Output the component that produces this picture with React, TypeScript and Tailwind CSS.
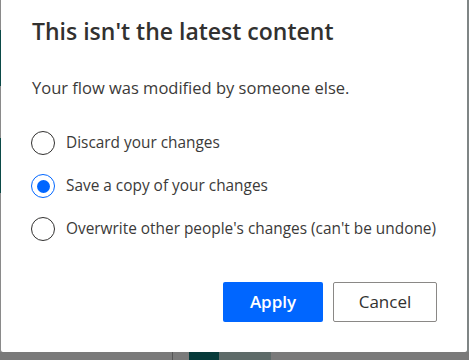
import { useState } from "react";

const options = [
  "Discard your changes",
  "Save a copy of your changes",
  "Overwrite other people's changes (can't be undone)",
];

function Radio({ checked }: { checked: boolean }) {
  return (
    <span
      className={`flex h-[24px] w-[24px] shrink-0 items-center justify-center rounded-full border ${
        checked ? "border-[#0066ff]" : "border-[#323130]"
      }`}
    >
      {checked && <span className="h-[13px] w-[13px] rounded-full bg-[#0066ff]" />}
    </span>
  );
}

export default function App() {
  const [choice, setChoice] = useState(1);

  return (
    <div
      className="flex h-[360px] w-[469px] flex-col overflow-hidden bg-[#7a7a7a] text-[#323130]"
      style={{ fontFamily: '"Open Sans", "Noto Sans", Arial, sans-serif' }}
    >
      <div className="flex flex-1">
        {/* backdrop strip on the left */}
        <div className="flex w-px flex-col bg-[#8a8a8a]">
          <div className="h-[30px]" />
          <div className="h-[56px] bg-[#0b4a48]" />
          <div className="h-[52px]" />
          <div className="h-[55px] bg-[#0b4a48]" />
        </div>

        {/* Dialog */}
        <div className="flex flex-1 flex-col rounded-b-[2px] bg-white pl-[31px] pr-[30px]">
          <h2 className="pt-[17px] text-[23px] font-semibold leading-7 text-[#323130]">
            This isn't the latest content
          </h2>
          <p className="mt-[32px] text-[16.5px] leading-[22px] text-[#3b3a39]">
            Your flow was modified by someone else.
          </p>

          <div className="-ml-px mt-[32px] flex flex-col gap-[19px]">
            {options.map((label, i) => (
              <button
                key={label}
                onClick={() => setChoice(i)}
                className="flex items-center gap-[11px] text-left"
              >
                <Radio checked={choice === i} />
                <span className="text-[15.4px] leading-5 text-[#3b3a39]">{label}</span>
              </button>
            ))}
          </div>

          <div className="mt-auto mb-[30px] flex justify-end gap-[10px]">
            <button className="h-10 w-[100px] rounded-[2px] bg-[#0066ff] text-[17px] font-semibold text-white">
              Apply
            </button>
            <button className="h-10 w-[104px] rounded-[2px] border border-[#8a8886] bg-white text-[17px] text-[#323130]">
              Cancel
            </button>
          </div>
        </div>

        {/* backdrop strip on the right */}
        <div className="w-[2px] bg-[#7f8585]" />
      </div>

      {/* backdrop strip at the bottom */}
      <div className="flex h-[8px]">
        <div className="w-[172px]" />
        <div className="w-px bg-[#555]" />
        <div className="w-[16px]" />
        <div className="w-[30px] bg-[#073a3a]" />
        <div className="w-[52px] bg-[#5e6b69]" />
      </div>
    </div>
  );
}
